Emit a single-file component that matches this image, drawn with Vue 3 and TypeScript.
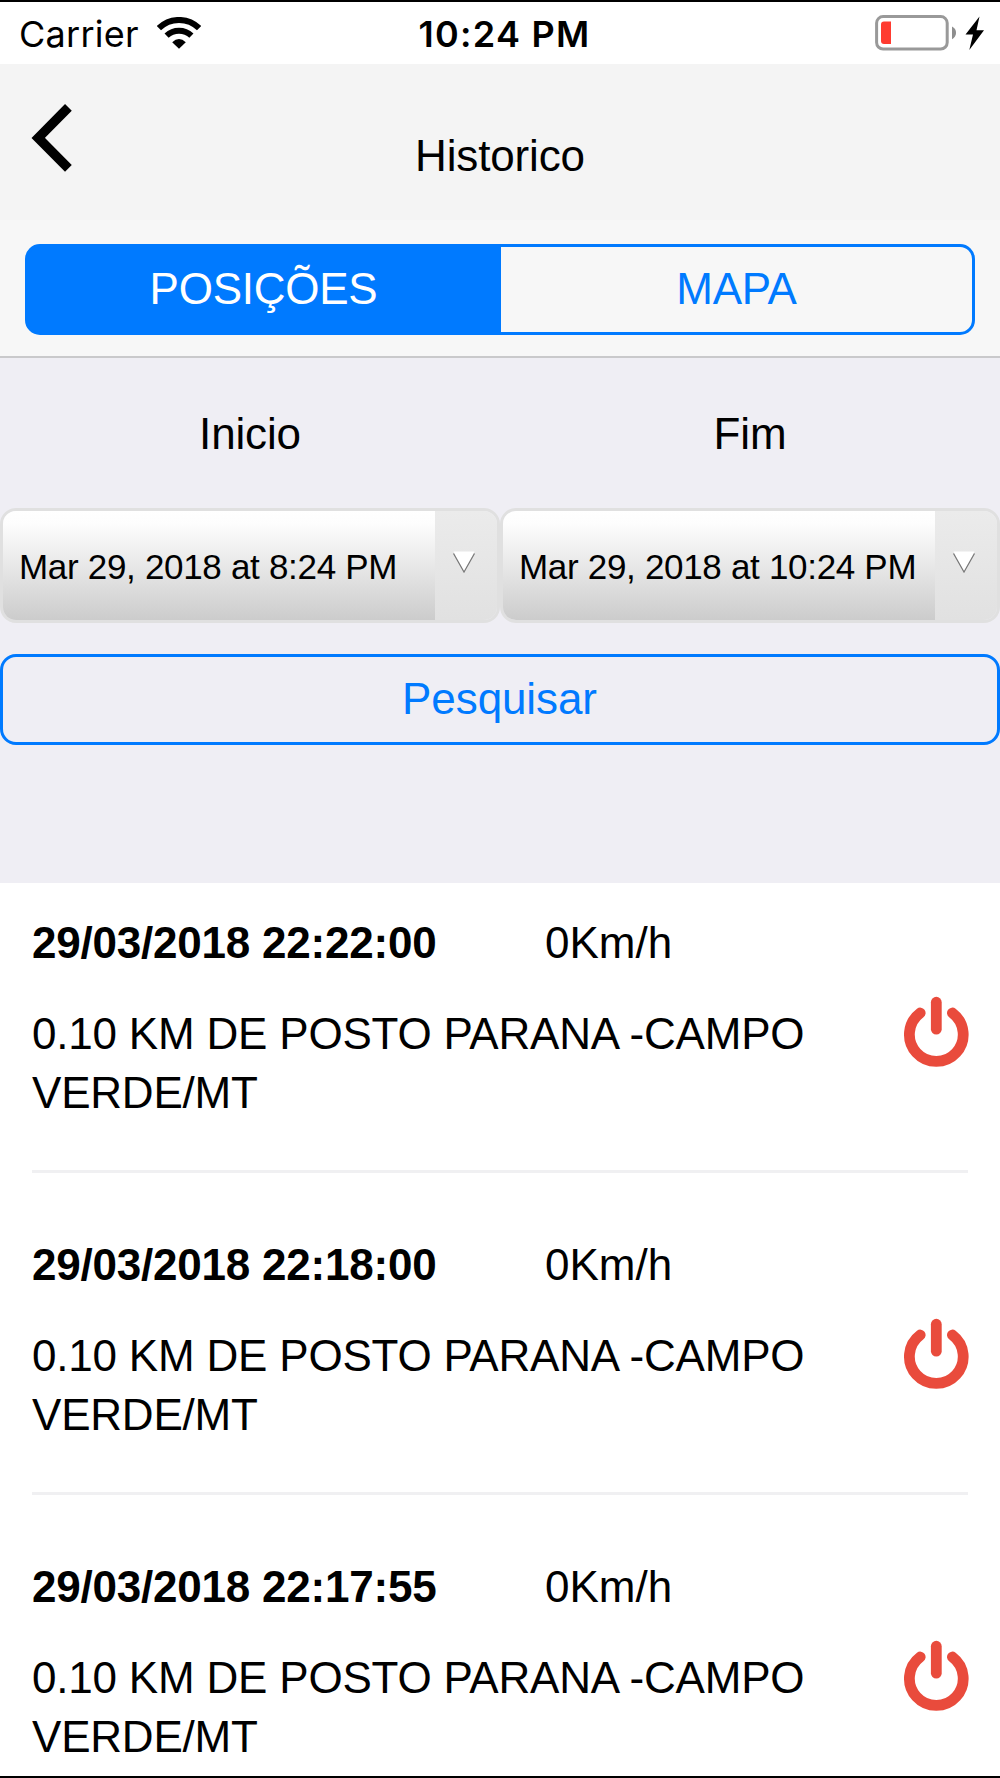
<script setup lang="ts">
import { ref } from 'vue'

interface Position {
  time: string
  speed: string
  place: string
}

const tabs = ['POSIÇÕES', 'MAPA']
const activeTab = ref(0)

const fields = [
  { label: 'Inicio', value: 'Mar 29, 2018 at 8:24 PM' },
  { label: 'Fim', value: 'Mar 29, 2018 at 10:24 PM' },
]

const positions: Position[] = ['22:22:00', '22:18:00', '22:17:55'].map((hour) => ({
  time: `29/03/2018 ${hour}`,
  speed: '0Km/h',
  place: '0.10 KM DE POSTO PARANA -CAMPO VERDE/MT',
}))
</script>

<template>
  <div class="screen">
    <div class="status">
      <div class="carrier">
        <span>Carrier</span>
        <svg class="wifi" width="44" height="32" viewBox="0 0 44 32" fill="none" stroke="#000">
          <path d="M1.9 11.2 A28.6 28.6 0 0 1 42.1 11.2" stroke-width="6" />
          <path d="M9.6 18.7 A18 18 0 0 1 34.4 18.7" stroke-width="6" />
          <path d="M15.2 25.3 Q22 18.8 28.8 25.3 L22 31.8 Z" fill="#000" stroke="none" />
        </svg>
      </div>
      <span class="clock">10:24 PM</span>
      <svg class="battery" width="111" height="36" viewBox="0 0 111 36">
        <rect x="1.6" y="1.6" width="70.6" height="32.4" rx="6.5" fill="none" stroke="#999" stroke-width="3" />
        <path d="M9 6.5 H16 V29 H9 Q6 29 6 26 V9.5 Q6 6.5 9 6.5Z" fill="#ff3b30" />
        <path d="M77 11.5 Q81 13.5 81 17.8 Q81 22 77 24.2Z" fill="#8e8e8e" />
        <path d="M104.500 1.500 L90.500 19.500 H98 L94.300 35 L109 15.200 H101.500Z" fill="#000" />
      </svg>
    </div>

    <header class="header">
      <svg class="back" width="42" height="70" viewBox="0 0 42 70" fill="none" stroke="#000" stroke-width="9.5">
        <path d="M37.4 4.4 L7.200 34.900 L37.400 65.400" />
      </svg>
      <h1 class="title">Historico</h1>
    </header>

    <nav class="tabs">
      <div class="segment" :class="{ second: activeTab === 1 }">
        <button
          v-for="(tab, i) in tabs"
          :key="tab"
          class="tab"
          :class="{ active: i === activeTab }"
          @click="activeTab = i"
        >{{ tab }}</button>
      </div>
    </nav>

    <section class="search">
      <div class="fields">
        <div v-for="field in fields" :key="field.label" class="field">
          <div class="label">{{ field.label }}</div>
          <div class="picker">
            <span class="value">{{ field.value }}</span>
            <span class="arrow">
              <svg width="24" height="24" viewBox="0 0 24 24">
                <path d="M1.500 1.500 H22.500 L12 21.500Z" fill="#fff" />
                <path d="M1.500 3.500 L12 22 L22.500 3.500" fill="none" stroke="#777" stroke-width="1.200" />
              </svg>
            </span>
          </div>
        </div>
      </div>
      <button class="submit">Pesquisar</button>
    </section>

    <main class="list">
      <article v-for="item in positions" :key="item.time" class="item">
        <div class="row">
          <strong class="time">{{ item.time }}</strong>
          <span class="speed">{{ item.speed }}</span>
        </div>
        <div class="row body">
          <p class="place">{{ item.place }}</p>
          <svg class="power" width="66" height="72" viewBox="0 0 66 72" fill="none" stroke="#e94b3c" stroke-width="10.800" stroke-linecap="round">
            <path d="M17.200 17 A26.900 26.900 0 1 0 49.400 17" />
            <path d="M33.300 6.200 V33.200" />
          </svg>
        </div>
      </article>
    </main>
  </div>
</template>

<style>
body {
  margin: 0;
}
</style>

<style scoped>
.screen {
  box-sizing: border-box;
  width: 1000px;
  height: 1778px;
  overflow: hidden;
  display: flex;
  flex-direction: column;
  border-top: 2px solid #000;
  border-bottom: 2px solid #000;
  background: #fff;
  color: #000;
  font-family: "Liberation Sans", Arial, sans-serif;
  font-size: 44px;
}
.status {
  flex: none;
  display: grid;
  grid-template-columns: 1fr auto 1fr;
  height: 62px;
  font: 36px/65px Inter, sans-serif;
}
.carrier {
  display: flex;
  padding-left: 19px;
  letter-spacing: 0.25px;
}
.wifi {
  margin: 15px 0 0 18px;
}
.clock {
  padding-left: 9px;
  font-weight: 600;
  letter-spacing: 1.25px;
}
.battery {
  justify-self: end;
  margin: 13px 14px 0 0;
}
.header {
  flex: none;
  height: 156px;
  display: grid;
  grid-template-columns: 200px 1fr 200px;
  background: #f4f4f4;
}
.back {
  margin: 39px 0 0 31px;
}
.title {
  margin: 62px 0 0;
  font-size: 44px;
  font-weight: 400;
  letter-spacing: -0.15px;
  line-height: 60px;
  text-align: center;
}
.tabs {
  flex: none;
  box-sizing: border-box;
  height: 138px;
  padding: 24px 25px 0;
  border-bottom: 2px solid #c9c9cb;
  background: #f7f7f7;
}
.segment {
  box-sizing: border-box;
  height: 91px;
  display: flex;
  border: 3px solid #007aff;
  border-radius: 15px;
  background: linear-gradient(90deg, #007aff 476px, transparent 0) border-box;
}
.segment.second {
  background: linear-gradient(90deg, transparent 476px, #007aff 0) border-box;
}
.tab {
  flex: 0 0 473px;
  padding: 0 2px 1px 0;
  border: 0;
  background: transparent;
  color: #007aff;
  font: inherit;
  letter-spacing: -0.25px;
}
.tab.active {
  color: #fff;
}
.search {
  flex: none;
  box-sizing: border-box;
  height: 525px;
  background: #efeef4;
}
.fields {
  display: flex;
}
.field {
  width: 500px;
}
.label {
  padding: 46px 0 44px;
  letter-spacing: -0.15px;
  line-height: 60px;
  text-align: center;
}
.picker {
  box-sizing: border-box;
  height: 115px;
  display: flex;
  border: 3px solid #e0e0e0;
  border-radius: 16px;
  overflow: hidden;
}
.value {
  box-sizing: border-box;
  width: 432px;
  padding-left: 16px;
  background: linear-gradient(#fff, #fdfdfd 12%, #ccc);
  font-size: 35px;
  letter-spacing: -0.31px;
  line-height: 111px;
  white-space: nowrap;
}
.arrow {
  flex: 1;
  padding: 39px 0 0 17px;
  background: linear-gradient(#ebebeb, #e1e1e1);
  line-height: 0;
}
.submit {
  box-sizing: border-box;
  width: 1000px;
  height: 91px;
  display: block;
  margin: 31px 0 0;
  padding: 0 1px 1px 0;
  border: 3px solid #007aff;
  border-radius: 16px;
  background: transparent;
  color: #007aff;
  font: inherit;
  letter-spacing: -0.1px;
}
.list {
  flex: none;
  padding: 0 32px;
}
.item {
  box-sizing: border-box;
  height: 321.8px;
  padding-top: 30px;
}
.row {
  display: flex;
  line-height: 60px;
}
.time {
  width: 513px;
  letter-spacing: -0.22px;
}
.body {
  height: 166px;
  margin-top: 31px;
  justify-content: space-between;
  border-bottom: 3px solid #f0f0f2;
}
.place {
  width: 800px;
  margin: 0;
  letter-spacing: -0.2px;
  line-height: 59px;
}
.power {
  margin: -8px -1px 0 0;
}
</style>
